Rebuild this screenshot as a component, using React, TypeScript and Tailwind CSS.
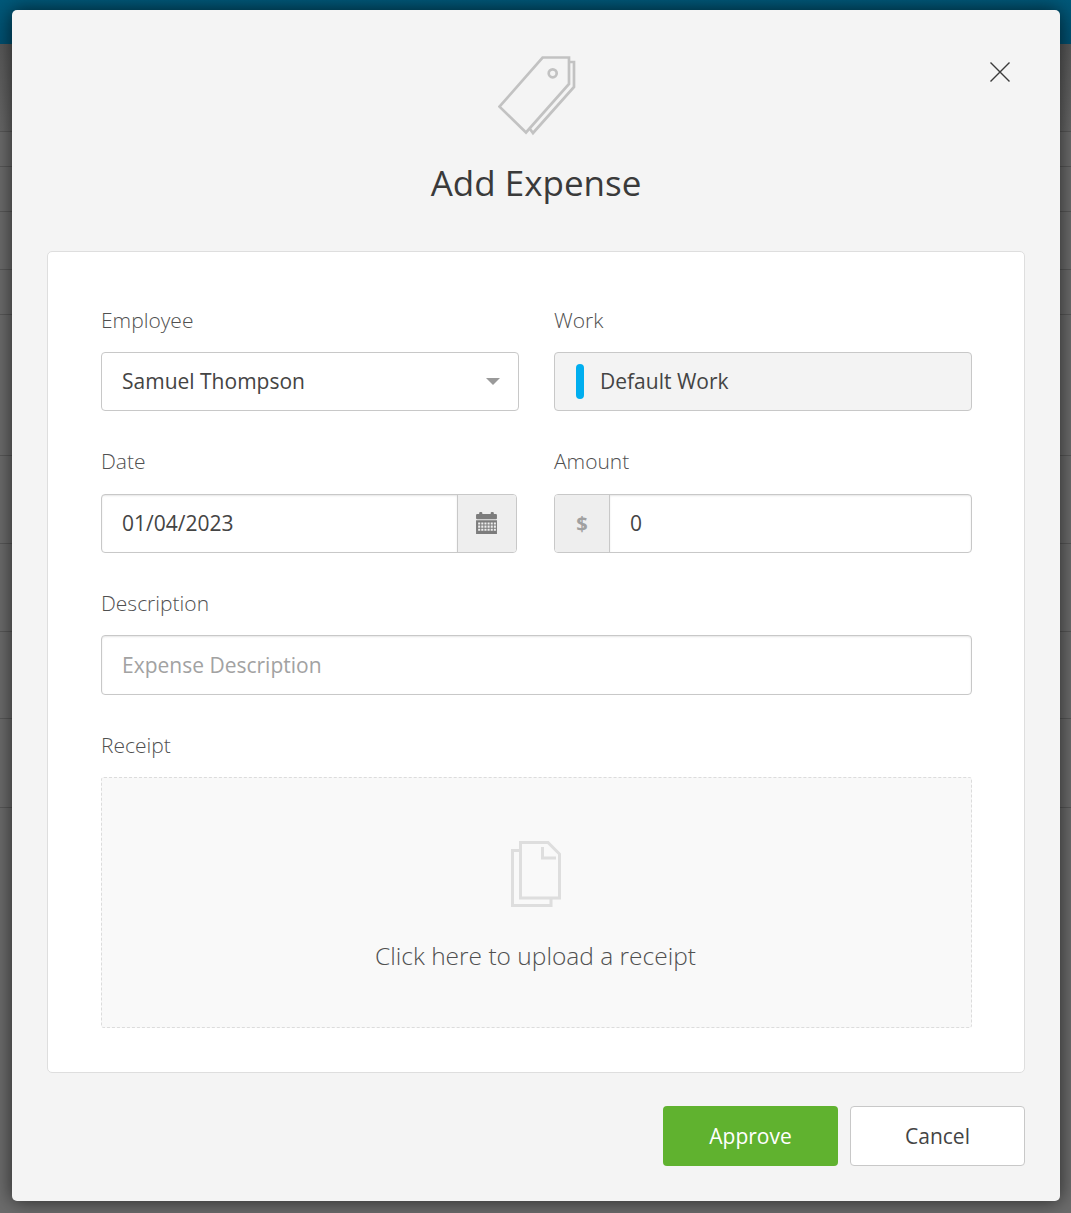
import React from 'react';

const font = { fontFamily: '"Open Sans", sans-serif' };

const TagIcon = () => (
    <svg width="78" height="80" viewBox="0 0 78 80" fill="none" stroke="#c2c2c2" strokeWidth="2.7">
        <path d="M44.6 1.5 H71 V28 L28 76.5 L1.5 50.7 Z" />
        <circle cx="54.7" cy="17.3" r="4" />
        <path d="M71 6 H76 V31 L35 77 L32 73" />
    </svg>
);

const ReceiptIcon = () => (
    <svg width="50" height="66" viewBox="0 0 50 66" fill="none" stroke="#dedede" strokeWidth="3">
        <path d="M9.5 1.5 H37 L48.5 13 V57 H9.5 Z" />
        <path d="M31.5 6 V17 H45" />
        <path d="M8 9.5 H1.5 V64.5 H40 V57" />
    </svg>
);

const CalendarIcon = () => (
    <svg width="21" height="23" viewBox="0 0 20 22" fill="#7c7c7c">
        <rect x="0" y="2" width="20" height="5" rx="1" />
        <rect x="3" y="0" width="3" height="4" rx="1" />
        <rect x="14" y="0" width="3" height="4" rx="1" />
        <path fillRule="evenodd" d="M0 8 H20 V21 H0 Z M2 10 V12 H4 V10 Z M5 10 V12 H7 V10 Z M8 10 V12 H10 V10 Z M11 10 V12 H13 V10 Z M14 10 V12 H16 V10 Z M17 10 V12 H19 V10 Z M2 13 V15 H4 V13 Z M5 13 V15 H7 V13 Z M8 13 V15 H10 V13 Z M11 13 V15 H13 V13 Z M14 13 V15 H16 V13 Z M17 13 V15 H19 V13 Z M2 16 V18 H4 V16 Z M5 16 V18 H7 V16 Z M8 16 V18 H10 V16 Z M11 16 V18 H13 V16 Z M14 16 V18 H16 V16 Z M17 16 V18 H19 V16 Z" />
    </svg>
);

const Label = ({ children }: { children: React.ReactNode }) => (
    <div className="h-[27px] text-[21px] leading-[27px] font-light text-[#505050] mb-[18px]">{children}</div>
);

const rows = [35, 45, 58, 45, 141, 88, 88, 87, 89, 120];

export default function App() {
    return (
        <div className="relative w-[1071px] h-[1213px] overflow-hidden bg-[#6c6c6c]" style={font}>
            {/* page behind the overlay */}
            <div className="h-[44px] bg-gradient-to-b from-[#00597a] to-[#005071]" />
            <div className="h-[87px] bg-gradient-to-b from-[#5a5a5a] to-[#686868]" />
            {rows.map((h, i) => (
                <div key={i} className="border-t border-[#585858]" style={{ height: h }} />
            ))}

            {/* modal */}
            <div className="absolute left-[12px] top-[10px] w-[1048px] h-[1191px] bg-[#f4f4f4] rounded-[5px] shadow-[0_0_20px_rgba(0,0,0,0.65)] pl-[35px] pr-[35px] pt-[46px]">
                <button className="absolute right-[49px] top-[51px] text-[#3a3a3a]">
                    <svg width="22" height="22" viewBox="0 0 22 22" stroke="currentColor" strokeWidth="1.4" fill="none">
                        <path d="M1.5 1.5 L20.5 20.5 M20.5 1.5 L1.5 20.5" />
                    </svg>
                </button>

                <div className="flex justify-center pl-[1px]">
                    <TagIcon />
                </div>
                <h1 className="mt-[21px] h-[52px] text-center text-[35px] leading-[52px] font-normal text-[#3a3a3a]">Add Expense</h1>

                <div className="mt-[42px] h-[822px] bg-white border border-[#dedede] rounded-[5px] pl-[53px] pr-[52px] pt-[55px]">
                    <div className="grid grid-cols-2 gap-x-[35px]">
                        <div>
                            <Label>Employee</Label>
                            <div className="h-[59px] flex items-center justify-between border border-[#c8c8c8] rounded-[4px] bg-white pl-[20px] pr-[18px] text-[21px] text-[#444]">
                                <span>Samuel Thompson</span>
                                <span className="w-0 h-0 border-x-[7px] border-x-transparent border-t-[7px] border-t-[#9a9a9a]" />
                            </div>
                        </div>
                        <div>
                            <Label>Work</Label>
                            <div className="h-[59px] flex items-center border border-[#c8c8c8] rounded-[4px] bg-[#f3f3f3] pl-[21px] text-[21px] text-[#444]">
                                <span className="w-[8px] h-[35px] rounded-full bg-[#00aeef] mr-[16px]" />
                                <span>Default Work</span>
                            </div>
                        </div>
                    </div>

                    <div className="grid grid-cols-2 gap-x-[35px] mt-[37px]">
                        <div>
                            <Label>Date</Label>
                            <div className="mt-[19px] h-[59px] w-[416px] flex border border-[#c8c8c8] rounded-[4px] overflow-hidden text-[21px] text-[#444]">
                                <div className="flex-1 flex items-center pl-[20px] shadow-[inset_0_1px_2px_rgba(0,0,0,0.1)]">01/04/2023</div>
                                <div className="w-[59px] flex items-center justify-center bg-[#eeeeee] border-l border-[#c8c8c8] pr-[2px] pb-[1px]">
                                    <CalendarIcon />
                                </div>
                            </div>
                        </div>
                        <div>
                            <Label>Amount</Label>
                            <div className="mt-[19px] h-[59px] flex border border-[#c8c8c8] rounded-[4px] overflow-hidden text-[21px] text-[#444]">
                                <div className="w-[55px] flex items-center justify-center bg-[#eeeeee] border-r border-[#c8c8c8] text-[20px] font-bold text-[#a0a0a0]">$</div>
                                <div className="flex-1 flex items-center pl-[20px] shadow-[inset_0_1px_2px_rgba(0,0,0,0.1)]">0</div>
                            </div>
                        </div>
                    </div>

                    <div className="mt-[37px]">
                        <Label>Description</Label>
                        <div className="h-[60px] flex items-center border border-[#c8c8c8] rounded-[4px] pl-[20px] pt-[2px] text-[21px] text-[#a2a2a2] shadow-[inset_0_1px_2px_rgba(0,0,0,0.1)]">
                            Expense Description
                        </div>
                    </div>

                    <div className="mt-[37px]">
                        <Label>Receipt</Label>
                        <div className="h-[251px] flex flex-col items-center border border-dashed border-[#dcdcdc] rounded-[3px] bg-[#f9f9f9] pt-[63px] pr-[2px]">
                            <ReceiptIcon />
                            <div className="mt-[32px] text-[24.5px] leading-[33px] font-light text-[#505050]">Click here to upload a receipt</div>
                        </div>
                    </div>
                </div>

                <div className="flex justify-end gap-[12px] mt-[33px]">
                    <button className="w-[175px] h-[60px] pt-[2px] rounded-[4px] bg-[#60b22f] text-white text-[21px]">Approve</button>
                    <button className="w-[175px] h-[60px] pt-[2px] rounded-[4px] bg-white border border-[#c8c8c8] text-[#444] text-[21px]">Cancel</button>
                </div>
            </div>
        </div>
    );
}
